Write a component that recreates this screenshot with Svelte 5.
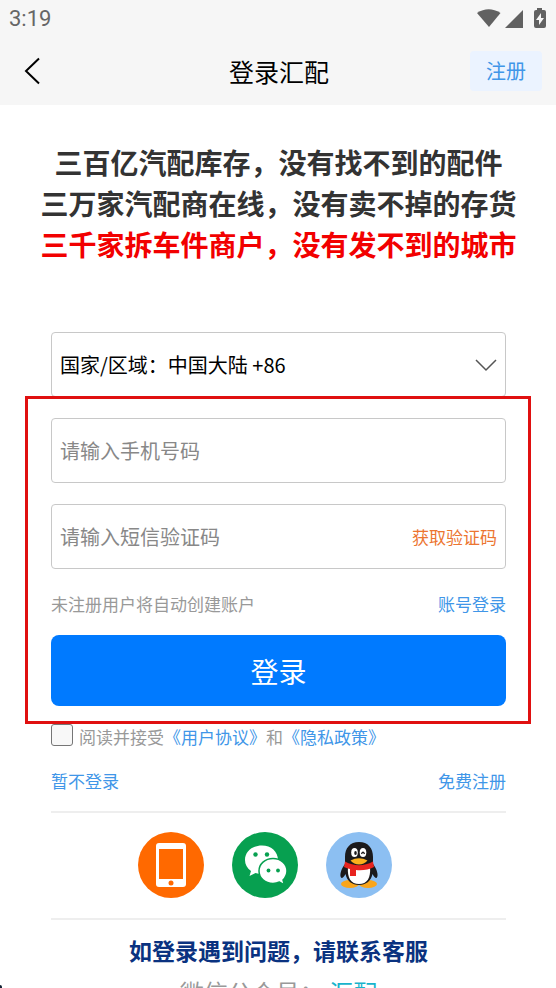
<script>
  let region = $state("+86");
  let phone = $state("");
  let code = $state("");
  let agreed = $state(false);

  const regions = [
    { code: "+86", label: "国家/区域：中国大陆 +86" },
    { code: "+852", label: "国家/区域：中国香港 +852" },
    { code: "+853", label: "国家/区域：中国澳门 +853" },
  ];

  function handleSubmit(event) {
    event.preventDefault();
  }
</script>

<div class="page">
  <header>
    <div class="status">
      <span class="time">3:19</span>
      <svg class="status-icons" width="70" height="22" viewBox="0 0 70 22" aria-hidden="true">
        <path d="M0 5 Q11.500 -2.500 23.500 5 L12 19 Z" />
        <path d="M46 2 V20 H28 Z" />
        <path
          fill-rule="evenodd"
          d="M60 0 h5 v2 h2 q2 0 2 2 v14 q0 2 -2 2 h-8 q-2 0 -2 -2 v-14 q0 -2 2 -2 h1 Z M64 5 l-5 7 h3 v5 l5 -7 h-3 Z"
        />
      </svg>
    </div>
    <nav>
      <button class="back" type="button" aria-label="返回">
        <svg width="16" height="28" viewBox="0 0 16 28">
          <path d="M15 1.500 L2 14 L15 26.500" fill="none" stroke="#000" stroke-width="2" />
        </svg>
      </button>
      <h1>登录汇配</h1>
      <a class="register" href="#register">注册</a>
    </nav>
  </header>

  <main>
    <div class="slogan">
      <p>三百亿汽配库存，没有找不到的配件</p>
      <p>三万家汽配商在线，没有卖不掉的存货</p>
      <p class="red">三千家拆车件商户，没有发不到的城市</p>
    </div>

    <form onsubmit={handleSubmit}>
      <div class="field">
        <select aria-label="国家/区域" bind:value={region}>
          {#each regions as item}
            <option value={item.code}>{item.label}</option>
          {/each}
        </select>
        <svg class="chevron" width="22" height="14" viewBox="0 0 22 14" aria-hidden="true">
          <path d="M1 2 L11 12 L21 2" fill="none" stroke="#555" stroke-width="1.500" />
        </svg>
      </div>

      <div class="highlight">
        <div class="field">
          <input type="tel" aria-label="手机号码" placeholder="请输入手机号码" bind:value={phone} />
        </div>
        <div class="field">
          <input type="text" aria-label="短信验证码" placeholder="请输入短信验证码" bind:value={code} />
          <button class="get-code" type="button">获取验证码</button>
        </div>
        <div class="row hint">
          <span>未注册用户将自动创建账户</span>
          <a href="#account">账号登录</a>
        </div>
        <button class="submit" type="submit">登录</button>
      </div>

      <div class="agree">
        <input id="agree" type="checkbox" bind:checked={agreed} />
        <label for="agree">阅读并接受<a href="#terms">《用户协议》</a>和<a href="#privacy">《隐私政策》</a></label>
      </div>
    </form>

    <div class="row links">
      <a href="#skip">暂不登录</a>
      <a href="#free">免费注册</a>
    </div>

    <div class="socials">
      <button type="button" aria-label="手机登录">
        <svg viewBox="0 0 66 66">
          <circle cx="33" cy="33" r="33" fill="#ff6900" />
          <rect x="18" y="11" width="30" height="44" rx="3" fill="#fff" />
          <rect x="21" y="17" width="24" height="30" fill="#ff6900" />
          <circle cx="33" cy="51" r="2.500" fill="#ff6900" />
        </svg>
      </button>
      <button type="button" aria-label="微信登录">
        <svg viewBox="0 0 66 66">
          <circle cx="33" cy="33" r="33" fill="#07a050" />
          <path
            fill="#fff"
            d="M30 13.500 C20 13.500 13 20 13 28 C13 32.500 15 36 19 39 L17.500 44 L23.500 41 C26 42 29 42.300 32 42 L46 28 C46 19.500 39 13.500 30 13.500 Z"
          />
          <path
            fill="#fff"
            stroke="#07a050"
            stroke-width="1.500"
            d="M41 26.500 C33 26.500 27 32 27 39 C27 46 33 51.500 41 51.500 C43.500 51.500 45.500 51 47.500 50 L52.500 53 L51 48 C53.500 45.500 55 42.500 55 39 C55 32 49 26.500 41 26.500 Z"
          />
          <g fill="#07a050">
            <circle cx="23.500" cy="22.500" r="2.200" />
            <circle cx="35" cy="22.500" r="2.200" />
            <circle cx="36.500" cy="38.500" r="1.900" />
            <circle cx="46" cy="38.500" r="1.900" />
          </g>
        </svg>
      </button>
      <button type="button" aria-label="QQ登录">
        <svg viewBox="0 0 66 66">
          <circle cx="33" cy="33" r="33" fill="#8cbff2" />
          <ellipse cx="24" cy="52" rx="9" ry="4" fill="#f9a51a" />
          <ellipse cx="42" cy="52" rx="9" ry="4" fill="#f9a51a" />
          <path
            fill="#1b1a1c"
            d="M33 10 C24 10 19 16 19 25 L19 32 C15 37 13 44 15.500 46 C17 46 18.500 44 19.500 42 C21 49 26 53 33 53 C40 53 45 49 46.500 42 C47.500 44 49 46 50.500 46 C53 44 51 37 47 32 L47 25 C47 16 42 10 33 10 Z"
          />
          <path
            fill="#fff"
            d="M22 35 C21 46 25 52 33 52 C41 52 45 46 44 35 Z"
          />
          <ellipse cx="28.500" cy="20.500" rx="3.300" ry="4.500" fill="#fff" />
          <ellipse cx="37" cy="20.500" rx="3.300" ry="4.500" fill="#fff" />
          <ellipse cx="29.500" cy="21" rx="1.300" ry="2" fill="#1b1a1c" />
          <path d="M35.500 22 Q37 18.500 38.500 22" fill="none" stroke="#1b1a1c" stroke-width="1.300" />
          <path
            fill="#e8241f"
            d="M19 29.500 Q33 37 47 29.500 L48 35 Q40 39 30 38 V44 H24 V37 Q21 36.500 18 35 Z"
          />
          <path d="M24.500 28.500 Q33 24 41.500 28.500 Q38 32.500 33 32.500 Q28 32.500 24.500 28.500 Z" fill="#fbb01c" />
        </svg>
      </button>
    </div>

    <footer>
      <h2>如登录遇到问题，请联系客服</h2>
      <p>微信公众号： <a href="#wechat">汇配</a></p>
    </footer>
  </main>

  <span class="corner"></span>
</div>

<style>
  :global(body) {
    margin: 0;
    background: #fff;
  }

  .page {
    position: relative;
    height: 100vh;
    overflow: hidden;
    font-family: "Noto Sans CJK SC", sans-serif;
    font-size: 17px;
    line-height: 30px;
    color: #999;
  }

  h1,
  h2,
  p {
    margin: 0;
  }

  a {
    color: #4096e8;
    text-decoration: none;
  }

  button,
  input,
  select {
    font-family: inherit;
    box-sizing: border-box;
  }

  button {
    padding: 0;
    border: none;
    background: none;
    cursor: pointer;
  }

  svg {
    display: block;
  }

  header {
    background: #f6f6f6;
  }

  .status {
    display: flex;
    align-items: center;
    justify-content: space-between;
    height: 38px;
    padding: 0 9px;
  }

  .time {
    font-family: Roboto, sans-serif;
    font-size: 22px;
    font-weight: 400;
    color: #666;
  }

  .status-icons {
    fill: #616161;
  }

  nav {
    display: grid;
    grid-template-columns: 1fr auto 1fr;
    align-items: center;
    height: 66px;
    padding: 0 14px 1px 24px;
  }

  .back {
    justify-self: start;
  }

  h1 {
    padding-right: 8px;
    font-size: 25px;
    font-weight: 400;
    color: #000;
  }

  .register {
    justify-self: end;
    padding: 0 16px;
    border-radius: 4px;
    background: #ebf3ff;
    font-size: 20px;
    line-height: 40px;
  }

  main {
    padding: 37px 50px 0 51px;
  }

  .slogan {
    margin: 0 -20px 67px;
    font-size: 28px;
    font-weight: 700;
    line-height: 41px;
    text-align: center;
    white-space: nowrap;
    color: #333;
  }

  .slogan .red {
    color: #f20000;
  }

  .field {
    display: flex;
    align-items: center;
    height: 65px;
    margin-bottom: 21px;
    padding: 0 8px;
    box-sizing: border-box;
    border: 1px solid #c8c8c8;
    border-radius: 4px;
    background: #fff;
  }

  .field input,
  .field select {
    flex: 1;
    min-width: 0;
    height: 100%;
    padding: 0;
    border: none;
    outline: none;
    background: none;
    font-size: 20px;
    color: #000;
  }

  .field select {
    appearance: none;
  }

  .field input::placeholder {
    color: #888;
    opacity: 1;
  }

  .get-code {
    font-size: 17px;
    color: #ec7530;
  }

  /* red frame around the sign-in fields */
  .highlight {
    position: relative;
  }

  .highlight::after {
    content: "";
    position: absolute;
    inset: -22px -25px -18px -26px;
    border: 3px solid #e01010;
    pointer-events: none;
  }

  .row {
    display: flex;
    justify-content: space-between;
  }

  .hint {
    margin-bottom: 17px;
    line-height: 28px;
  }

  .submit {
    display: block;
    width: 100%;
    height: 71px;
    border-radius: 8px;
    background: #007aff;
    font-size: 28px;
    color: #fff;
  }

  .agree {
    display: flex;
    align-items: flex-start;
    gap: 6px;
    margin-top: 18px;
    line-height: 26px;
  }

  .agree input {
    appearance: none;
    width: 22px;
    height: 22px;
    margin: 0;
    border: 1px solid #767676;
    border-radius: 3px;
    background: #f8f8f8;
  }

  .agree input:checked {
    background: #007aff;
  }

  .links {
    margin: 16px 0 15px;
  }

  .socials {
    display: flex;
    justify-content: center;
    gap: 28px;
    padding: 19px 28px 20px 0;
    border-top: 2px solid #eee;
    border-bottom: 2px solid #eee;
  }

  .socials button {
    width: 66px;
    height: 66px;
  }

  footer {
    padding-top: 9px;
    text-align: center;
  }

  h2 {
    font-size: 23px;
    font-weight: 700;
    line-height: 42px;
    color: #0a3280;
  }

  footer p {
    font-size: 24px;
    line-height: 42px;
  }

  footer a {
    color: #18b4cc;
  }

  .corner {
    position: absolute;
    left: 0;
    bottom: 0;
    width: 2px;
    height: 3px;
    border-top-right-radius: 2px;
    background: #123;
  }
</style>
